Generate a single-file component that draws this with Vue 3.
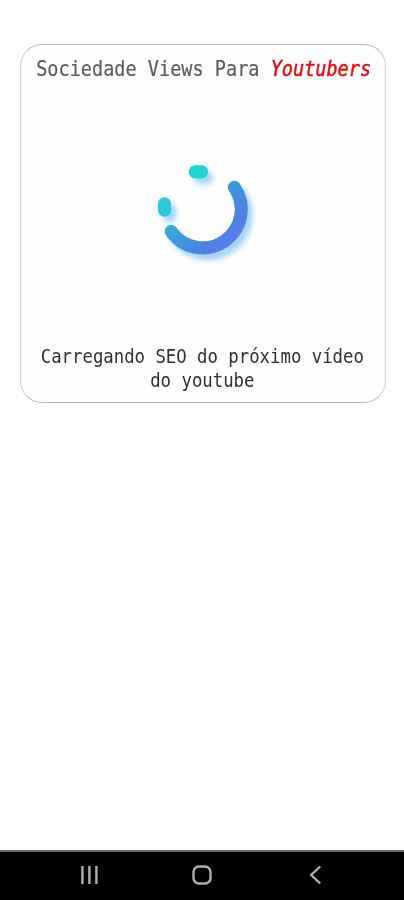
<script setup>
const title = 'Sociedade Views Para'
const accent = 'Youtubers'
const lines = ['Carregando SEO do próximo vídeo', 'do youtube']
</script>

<template>
  <div class="screen">
    <main class="page">
      <section class="card">
        <h1 class="title">{{ title }} <em>{{ accent }}</em></h1>
        <svg class="loader" viewBox="0 0 120 120" aria-hidden="true">
          <defs>
            <linearGradient id="ring" gradientUnits="userSpaceOnUse" x1="35" y1="35" x2="88" y2="88">
              <stop offset="0" stop-color="#28ced6" />
              <stop offset="0.5" stop-color="#3d9ad9" />
              <stop offset="0.8" stop-color="#4886e0" />
              <stop offset="1" stop-color="#557eea" />
            </linearGradient>
            <filter id="shade" x="-30%" y="-30%" width="170%" height="170%">
              <feDropShadow dx="5" dy="6" stdDeviation="2.6" flood-color="#68bcf7" flood-opacity="0.6" />
            </filter>
          </defs>
          <g filter="url(#shade)">
            <rect x="45.7" y="15.2" width="19.6" height="13.2" rx="6.6" fill="#1fd5cf" />
            <rect x="14.9" y="47.2" width="13.2" height="19.6" rx="6.6" fill="#2bc9d8" />
            <path d="M91.3 37.2 A38.5 38.5 0 0 1 28.2 81.4" fill="none" stroke="url(#ring)" stroke-width="13" stroke-linecap="round" />
          </g>
        </svg>
        <p class="status"><span v-for="line in lines" :key="line">{{ line }}</span></p>
      </section>
    </main>
    <nav class="navbar">
      <svg viewBox="0 0 20 20"><path d="M3.4 1v18M10.4 1v18M17.4 1v18" /></svg>
      <svg viewBox="0 0 20 20"><rect x="1.5" y="1.5" width="17" height="17" rx="5.5" /></svg>
      <svg viewBox="0 0 20 20"><path d="M15.2 1.5 6.2 10l9 8.5" /></svg>
    </nav>
  </div>
</template>

<style>
body { margin: 0; background: #fff; overflow: hidden; }
</style>

<style scoped>
.screen {
  display: flex;
  flex-direction: column;
  width: 404px;
  height: 900px;
  background: #fff;
  font-family: "DejaVu Sans Mono", monospace;
}
.page { flex: 1; padding: 44px 18px 0 20px; }
.card {
  box-sizing: border-box;
  display: flex;
  flex-direction: column;
  align-items: center;
  width: 366px;
  height: 359px;
  border: 1px solid #b5b5b5;
  border-left-color: #d2d2d2;
  border-right-color: #d2d2d2;
  border-radius: 22px;
  background: #fefefe;
}
.title {
  margin: 8px 0 0 2px;
  height: 32px;
  font-size: 21px;
  line-height: 32px;
  font-weight: 400;
  white-space: nowrap;
  color: #5c5c5c;
  transform: scaleX(0.883);
  -webkit-text-stroke: 0.2px currentColor;
}
.title em {
  color: #f00808;
  font-style: italic;
  -webkit-text-stroke-width: 0.45px;
}
.loader {
  width: 120px;
  height: 120px;
  margin-top: 65px;
}
.status {
  display: flex;
  flex-direction: column;
  align-items: center;
  margin: 74px 1px 0 0;
  font-size: 19px;
  line-height: 24px;
  white-space: nowrap;
  color: #303030;
  transform: scaleX(0.911);
}
.navbar {
  box-sizing: border-box;
  display: flex;
  justify-content: space-between;
  align-items: center;
  height: 50px;
  padding: 0 79px 2px;
  border-top: 2px solid #666;
  background: #000;
}
.navbar svg {
  width: 20px;
  height: 20px;
  fill: none;
  stroke: #b0b0b0;
  stroke-width: 2.4;
}
</style>
